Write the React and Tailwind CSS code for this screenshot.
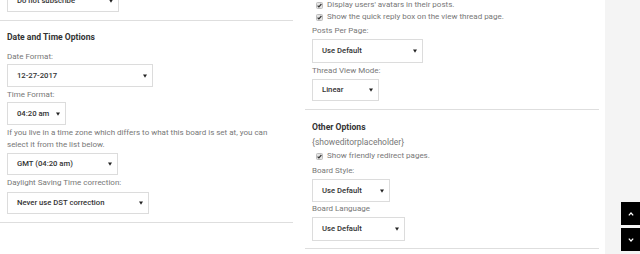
import React from "react";

function Caret() {
  return (
    <svg width="4" height="4" viewBox="0 0 4 4" className="shrink-0">
      <path d="M0 0.5 L4 0.5 L2 3.8 Z" fill="#222" />
    </svg>
  );
}

function Select({ text, w, h }) {
  return (
    <div
      className={`flex items-center justify-between border border-[#dcdcdc] bg-white pl-[9px] pr-[5px] text-[7.7px] font-medium text-[#333] ${w} ${h}`}
    >
      <span>{text}</span>
      <Caret />
    </div>
  );
}

function Check({ text }) {
  return (
    <div className="flex h-[12px] items-center pl-[4px] text-[8px] text-[#777]">
      <svg width="7" height="7" viewBox="0 0 7 7" className="mr-[4px] shrink-0">
        <rect x="0.5" y="0.5" width="6" height="6" rx="1" fill="#e4e4e4" stroke="#bdbdbd" />
        <path d="M1.6 3.6 L2.9 4.9 L5.4 2" stroke="#333" strokeWidth="1.2" fill="none" />
      </svg>
      <span>{text}</span>
    </div>
  );
}

function Label({ text, h = "h-[14px]", extra = "" }) {
  return (
    <div className={`flex items-center text-[8px] text-[#777] ${h} ${extra}`}>{text}</div>
  );
}

function Heading({ text, extra = "" }) {
  return (
    <div className={`flex h-[16px] items-center text-[8.6px] font-bold text-[#333] ${extra}`}>{text}</div>
  );
}

export default function App() {
  return (
    <div className="flex h-[254px] w-[640px] overflow-hidden bg-white font-['Roboto',sans-serif]">
      {/* left column */}
      <div className="-mt-[11px] flex w-[293px] shrink-0 flex-col">
        <div className="pl-[7px]">
          <Select text="Do not subscribe" w="w-[112px]" h="h-[23px]" />
        </div>
        <div className="mt-[8px] h-px bg-[#dedede]" />
        <div className="flex flex-col pl-[7px]">
          <Heading text="Date and Time Options" extra="mt-[8px]" />
          <Label text="Date Format:" extra="mt-[5px]" />
          <Select text="12-27-2017" w="w-[146px]" h="h-[23px]" />
          <Label text="Time Format:" extra="mt-[1px]" />
          <Select text="04:20 am" w="w-[59px]" h="h-[23px]" />
          <p className="mt-[2px] text-[8px] leading-[12px] text-[#777]">
            If you live in a time zone which differs to what this board is set at, you can
            <br />
            select it from the list below.
          </p>
          <div className="mt-[2px]">
            <Select text="GMT (04:20 am)" w="w-[111px]" h="h-[22px]" />
          </div>
          <Label text="Daylight Saving Time correction:" extra="mt-[1px]" />
          <div className="mt-[2px]">
            <Select text="Never use DST correction" w="w-[142px]" h="h-[22px]" />
          </div>
        </div>
        <div className="mt-[8px] h-px bg-[#dedede]" />
      </div>

      {/* right column */}
      <div className="ml-[12px] flex w-[294px] shrink-0 flex-col">
        <div className="-mt-[1px] flex flex-col pl-[7px]">
          <Check text="Display users' avatars in their posts." />
          <Check text="Show the quick reply box on the view thread page." />
          <Label text="Posts Per Page:" extra="mt-[1px]" />
          <div className="mt-[1px]">
            <Select text="Use Default" w="w-[111px]" h="h-[24px]" />
          </div>
          <Label text="Thread View Mode:" h="h-[15px]" />
          <div className="mt-[1px]">
            <Select text="Linear" w="w-[67px]" h="h-[22px]" />
          </div>
        </div>
        <div className="mt-[8px] h-px bg-[#dedede]" />
        <div className="flex flex-col pl-[7px]">
          <Heading text="Other Options" extra="mt-[9px]" />
          <div className="flex h-[15px] items-center text-[8.5px] text-[#777]">{"{showeditorplaceholder}"}</div>
          <Check text="Show friendly redirect pages." />
          <Label text="Board Style:" extra="mt-[2px]" />
          <div className="mt-[1px]">
            <Select text="Use Default" w="w-[78px]" h="h-[23px]" />
          </div>
          <Label text="Board Language" />
          <div className="mt-[1px]">
            <Select text="Use Default" w="w-[93px]" h="h-[24px]" />
          </div>
        </div>
        <div className="mt-[7px] h-px bg-[#dedede]" />
      </div>

      {/* sidebar */}
      <div className="ml-[6px] flex flex-1 flex-col items-end justify-end gap-[3px] bg-[#f4f4f4] pb-[3px]">
        <div className="flex h-[23px] w-[19px] items-center justify-center bg-black">
          <svg width="6" height="4" viewBox="0 0 6 4">
            <path d="M0.8 3.4 L3 1 L5.2 3.4" stroke="#fff" strokeWidth="1.2" fill="none" />
          </svg>
        </div>
        <div className="flex h-[23px] w-[19px] items-center justify-center bg-black">
          <svg width="6" height="4" viewBox="0 0 6 4">
            <path d="M0.8 0.6 L3 3 L5.2 0.6" stroke="#fff" strokeWidth="1.2" fill="none" />
          </svg>
        </div>
      </div>
    </div>
  );
}
